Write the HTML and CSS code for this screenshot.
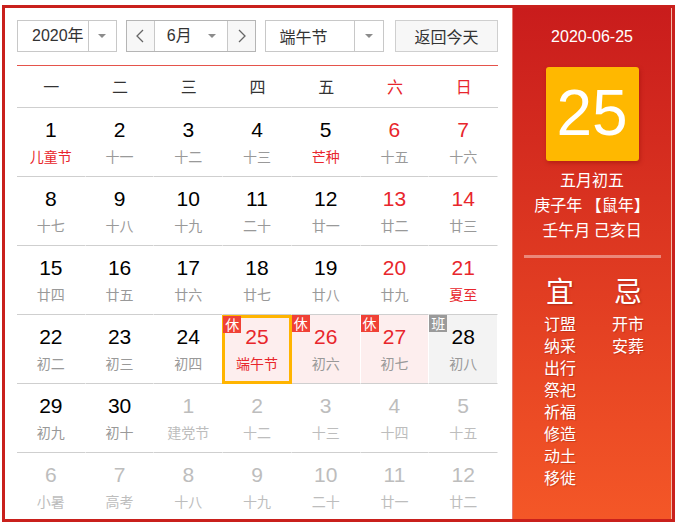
FILE: index.html
```html
<!DOCTYPE html>
<html lang="zh-CN">
<head>
<meta charset="utf-8">
<title>万年历</title>
<link rel="stylesheet" href="styles.css">
</head>
<body>
<div class="cal">
  <div class="main">
    <div class="toolbar">
      <div class="select year">
        <span class="sel-text">2020年</span>
        <span class="sel-arrow"><i class="tri"></i></span>
      </div>
      <div class="month-group">
        <span class="nav"><svg width="8" height="14" viewBox="0 0 8 14"><polyline points="7,1 1,7 7,13" fill="none" stroke="#666" stroke-width="1.3"/></svg></span>
        <span class="month"><span class="sel-text">6月</span><i class="tri"></i></span>
        <span class="nav"><svg width="8" height="14" viewBox="0 0 8 14"><polyline points="1,1 7,7 1,13" fill="none" stroke="#666" stroke-width="1.3"/></svg></span>
      </div>
      <div class="select holiday">
        <span class="sel-text">端午节</span>
        <span class="sel-arrow"><i class="tri"></i></span>
      </div>
      <div class="today-btn">返回今天</div>
    </div>

    <div class="week-head">
      <span>一</span><span>二</span><span>三</span><span>四</span><span>五</span><span class="we">六</span><span class="we">日</span>
    </div>

    <div class="grid">
      <div class="day"><b>1</b><em class="fest">儿童节</em></div>
      <div class="day"><b>2</b><em>十一</em></div>
      <div class="day"><b>3</b><em>十二</em></div>
      <div class="day"><b>4</b><em>十三</em></div>
      <div class="day"><b>5</b><em class="fest">芒种</em></div>
      <div class="day we"><b>6</b><em>十五</em></div>
      <div class="day we"><b>7</b><em>十六</em></div>

      <div class="day"><b>8</b><em>十七</em></div>
      <div class="day"><b>9</b><em>十八</em></div>
      <div class="day"><b>10</b><em>十九</em></div>
      <div class="day"><b>11</b><em>二十</em></div>
      <div class="day"><b>12</b><em>廿一</em></div>
      <div class="day we"><b>13</b><em>廿二</em></div>
      <div class="day we"><b>14</b><em>廿三</em></div>

      <div class="day"><b>15</b><em>廿四</em></div>
      <div class="day"><b>16</b><em>廿五</em></div>
      <div class="day"><b>17</b><em>廿六</em></div>
      <div class="day"><b>18</b><em>廿七</em></div>
      <div class="day"><b>19</b><em>廿八</em></div>
      <div class="day we"><b>20</b><em>廿九</em></div>
      <div class="day we"><b>21</b><em class="fest">夏至</em></div>

      <div class="day"><b>22</b><em>初二</em></div>
      <div class="day"><b>23</b><em>初三</em></div>
      <div class="day"><b>24</b><em>初四</em></div>
      <div class="day rest we selected"><span class="badge">休</span><b>25</b><em class="fest">端午节</em></div>
      <div class="day rest we"><span class="badge">休</span><b>26</b><em>初六</em></div>
      <div class="day rest we"><span class="badge">休</span><b>27</b><em>初七</em></div>
      <div class="day work"><span class="badge grey">班</span><b>28</b><em>初八</em></div>

      <div class="day"><b>29</b><em>初九</em></div>
      <div class="day"><b>30</b><em>初十</em></div>
      <div class="day other"><b>1</b><em>建党节</em></div>
      <div class="day other"><b>2</b><em>十二</em></div>
      <div class="day other"><b>3</b><em>十三</em></div>
      <div class="day other"><b>4</b><em>十四</em></div>
      <div class="day other"><b>5</b><em>十五</em></div>

      <div class="day other last"><b>6</b><em>小暑</em></div>
      <div class="day other last"><b>7</b><em>高考</em></div>
      <div class="day other last"><b>8</b><em>十八</em></div>
      <div class="day other last"><b>9</b><em>十九</em></div>
      <div class="day other last"><b>10</b><em>二十</em></div>
      <div class="day other last"><b>11</b><em>廿一</em></div>
      <div class="day other last"><b>12</b><em>廿二</em></div>
    </div>
  </div>

  <div class="side">
    <div class="side-date">2020-06-25</div>
    <div class="big-day">25</div>
    <div class="lunar-info">
      <div>五月初五</div>
      <div>庚子年 【鼠年】</div>
      <div>壬午月 己亥日</div>
    </div>
    <div class="divider"></div>
    <div class="yiji">
      <div class="col">
        <div class="yj-title">宜</div>
        <div class="yj-item">订盟</div>
        <div class="yj-item">纳采</div>
        <div class="yj-item">出行</div>
        <div class="yj-item">祭祀</div>
        <div class="yj-item">祈福</div>
        <div class="yj-item">修造</div>
        <div class="yj-item">动土</div>
        <div class="yj-item">移徙</div>
      </div>
      <div class="col">
        <div class="yj-title">忌</div>
        <div class="yj-item">开市</div>
        <div class="yj-item">安葬</div>
      </div>
    </div>
  </div>
</div>
</body>
</html>
```

FILE: styles.css
```css
* { box-sizing: border-box; }

body {
  margin: 0;
  background: #fff;
  font-family: "Liberation Sans", "Noto Sans CJK SC", sans-serif;
  color: #333;
}

.cal {
  margin: 5px 0 0 2px;
  width: 673px;
  height: 517px;
  border: 3px solid #c9201c;
  display: flex;
  overflow: hidden;
}

.main {
  width: 507px;
  padding: 12px 14px 0 12px;
  background: #fff;
}

/* toolbar */
.toolbar {
  display: flex;
  height: 32px;
  font-family: "Noto Sans CJK SC", sans-serif;
  font-size: 16px;
  color: #333;
}

.select {
  display: flex;
  border: 1px solid #c8c8c8;
  height: 32px;
  background: #fff;
}

.sel-text {
  line-height: 30px;
}

.year { width: 100px; }
.year .sel-text { width: 70px; padding-left: 14px; font-family: "Liberation Sans", "Noto Sans CJK SC", sans-serif; }
.holiday { width: 119px; margin-left: 9px; }
.holiday .sel-text { width: 88px; padding-left: 13px; }

.sel-arrow {
  flex: 1;
  border-left: 1px solid #c8c8c8;
  display: flex;
  align-items: center;
  justify-content: center;
}

.tri {
  display: block;
  width: 0;
  height: 0;
  border-left: 4px solid transparent;
  border-right: 4px solid transparent;
  border-top: 4px solid #8c8c8c;
}

.month-group {
  display: flex;
  width: 131px;
  height: 32px;
  margin-left: 9px;
  border: 1px solid #b5b5b5;
}

.nav {
  width: 27px;
  background: #f7f7f7;
  display: flex;
  align-items: center;
  justify-content: center;
}

.month {
  flex: 1;
  display: flex;
  align-items: center;
  justify-content: space-between;
  padding: 0 11px 0 12px;
  border-left: 1px solid #c8c8c8;
  border-right: 1px solid #c8c8c8;
  background: #fff;
  font-family: "Liberation Sans", "Noto Sans CJK SC", sans-serif;
}

.today-btn {
  margin-left: 11px;
  width: 103px;
  height: 32px;
  border: 1px solid #cfcfcf;
  background: #f7f7f7;
  text-align: center;
  line-height: 30px;
  font-size: 16px;
}

/* weekday header */
.week-head {
  margin-top: 13px;
  border-top: 1px solid #e5534b;
  border-bottom: 1px solid #cfcfcf;
  height: 43px;
  display: grid;
  grid-template-columns: repeat(7, 1fr);
  font-family: "Noto Sans CJK SC", sans-serif;
  font-size: 16px;
  color: #333;
}

.week-head span {
  text-align: center;
  line-height: 41px;
}

.week-head .we { color: #e8262c; }

/* days */
.grid {
  display: grid;
  grid-template-columns: repeat(7, 1fr);
}

.day {
  position: relative;
  height: 69px;
  border-bottom: 1px solid #cfcfcf;
  border-right: 1px solid transparent;
  background-clip: padding-box;
  text-align: center;
  padding-top: 10px;
}

.day.last { border-bottom: none; }

.day b {
  display: block;
  font-weight: normal;
  font-size: 21px;
  line-height: 24px;
  color: #000;
  font-family: "Liberation Sans", sans-serif;
}

.day em {
  display: block;
  font-style: normal;
  font-size: 14px;
  line-height: 18px;
  margin-top: 5px;
  color: #999;
  font-family: "Noto Sans CJK SC", sans-serif;
}

.day.we b { color: #e8262c; }
.day em.fest { color: #e8262c; }

.day.other b { color: #bdbdbd; }
.day.other em { color: #bdbdbd; }

.day.rest { background-color: #fdeeee; }
.day.work { background-color: #f3f3f3; }

.day.selected {
  border: 3px solid #ffb400;
  padding-top: 7px;
  margin-left: -1px;
}

.badge {
  position: absolute;
  top: 0;
  left: 0;
  width: 18px;
  height: 17px;
  background: #f04136;
  color: #fff;
  font-size: 14px;
  line-height: 17px;
  text-align: center;
  font-family: "Noto Sans CJK SC", sans-serif;
}

.day.selected .badge { top: -2px; left: -2px; }
.badge.grey { background: #9a9a9a; }

/* side panel */
.side {
  flex: 1;
  background: linear-gradient(180deg, #c91c1c 0%, #f45727 100%);
  border-left: 1px solid #e47a6e;
  border-right: 1px solid #f3b8a8;
  color: #fff;
  display: flex;
  flex-direction: column;
  align-items: center;
  font-family: "Noto Sans CJK SC", sans-serif;
}

.side-date {
  margin-top: 19px;
  font-size: 16px;
  line-height: 20px;
  font-family: "Liberation Sans", sans-serif;
}

.big-day {
  margin-top: 20px;
  width: 93px;
  height: 94px;
  background: #ffb800;
  border-radius: 3px;
  box-shadow: 1px 2px 4px rgba(120, 0, 0, 0.35);
  text-align: center;
  line-height: 92px;
  font-size: 64px;
  font-family: "Liberation Sans", sans-serif;
}

.lunar-info {
  margin-top: 6px;
  text-align: center;
  font-size: 16px;
  line-height: 25px;
}

.divider {
  margin-top: 13px;
  width: 137px;
  height: 3px;
  background: rgba(255, 255, 255, 0.4);
}

.yiji {
  display: flex;
  margin-top: 15px;
  padding-left: 4px;
}

.col {
  width: 68px;
  text-align: center;
}

.yj-title {
  font-size: 28px;
  line-height: 34px;
  margin-bottom: 5px;
  text-shadow: 1px 1px 2px rgba(90, 0, 0, 0.35);
}

.yj-item {
  font-size: 16px;
  line-height: 22px;
  text-shadow: 1px 1px 1px rgba(90, 0, 0, 0.25);
}
```
